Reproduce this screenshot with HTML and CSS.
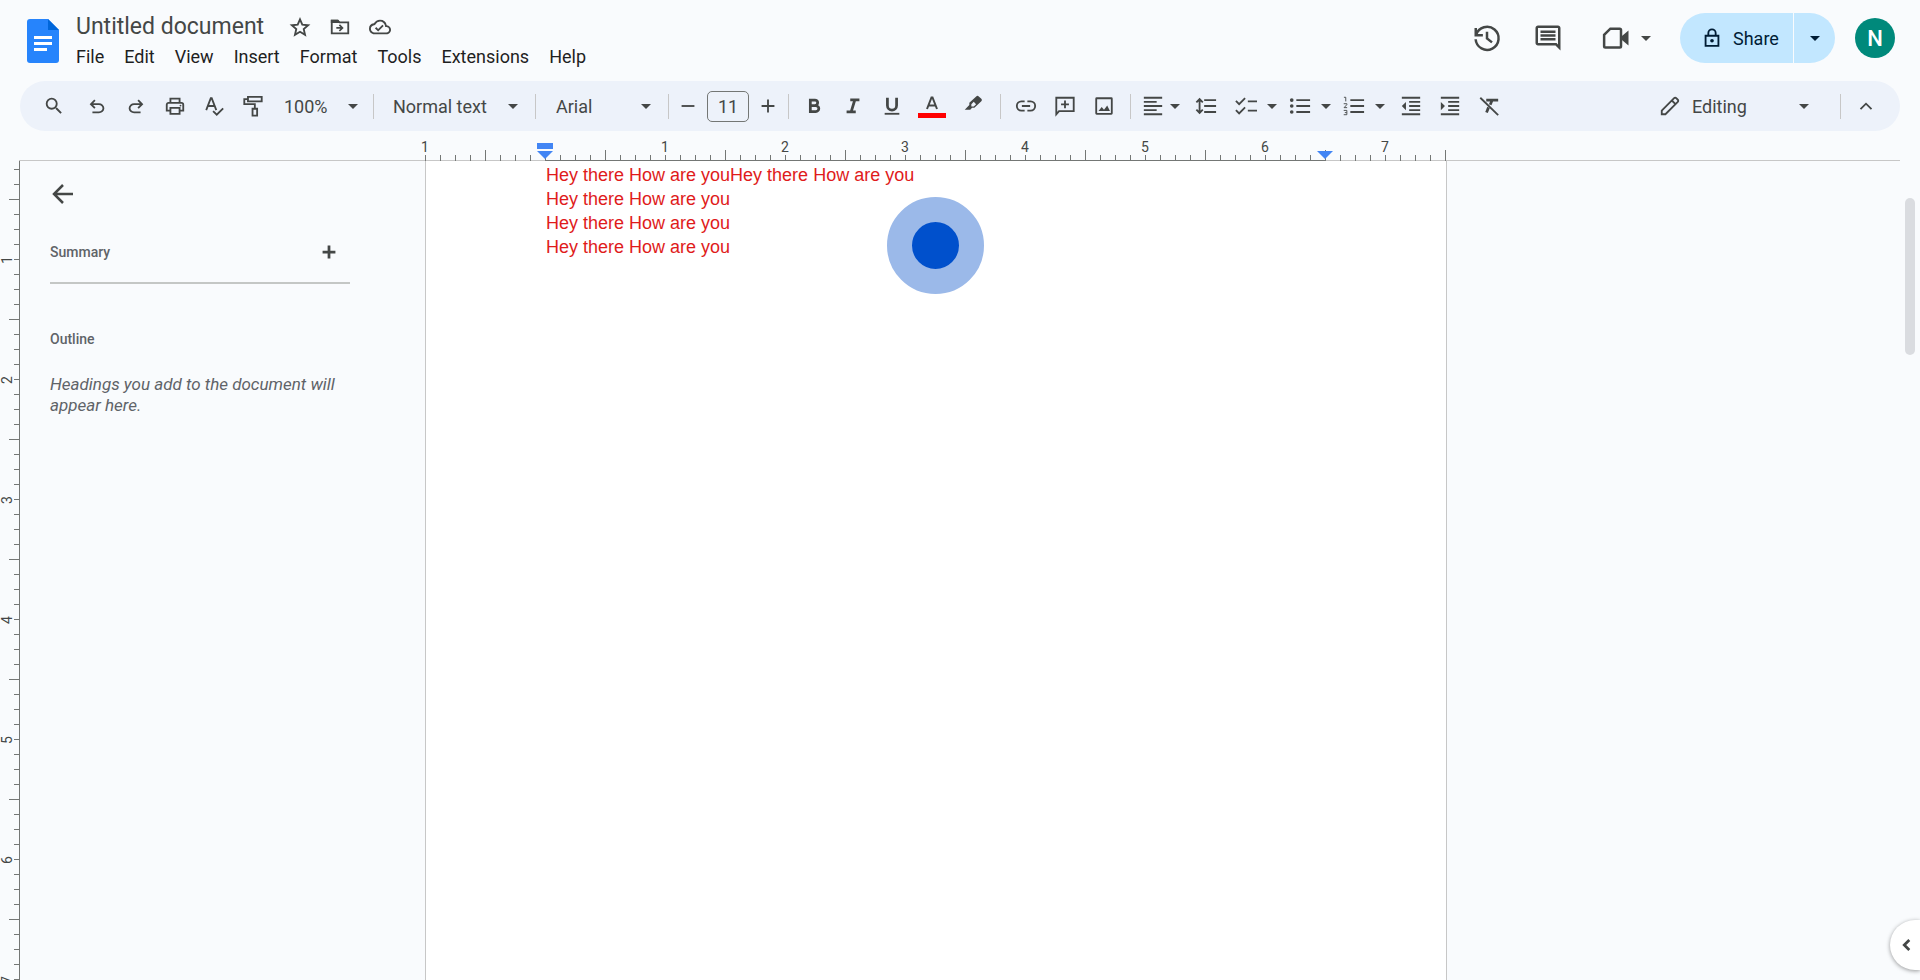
FILE: index.html
```html
<!DOCTYPE html>
<html lang="en">
<head>
  <meta charset="utf-8">
  <meta name="viewport" content="width=device-width, initial-scale=1">
  <title>Untitled document</title>
  <link rel="stylesheet" href="styles.css">
</head>
<body>
  <header class="header">
    <a href="#" class="logo" aria-label="Docs home">
      <svg width="32" height="44" viewBox="0 0 32 44">
        <path fill="#2684fc" d="M3 0h18l11 11v30a3 3 0 0 1-3 3H3a3 3 0 0 1-3-3V3a3 3 0 0 1 3-3z"/>
        <path fill="#0066da" d="M21 0l11 11H21z"/>
        <path fill="#fff" d="M7 17h18v3H7zM7 23h18v3H7zM7 29h13v3H7z"/>
      </svg>
    </a>
    <div class="heading">
      <div class="title-row">
        <h1 class="title">Untitled document</h1>
        <button class="title-btn" aria-label="Star"><svg class="icon" viewBox="0 0 24 24"><path d="M12 3.600l2.500 5.900 6.400.55-4.850 4.200 1.450 6.250L12 17.200 6.500 20.500l1.450-6.250L3.100 10.050l6.400-.55z" class="line"/></svg></button>
        <button class="title-btn" aria-label="Move"><svg class="icon" viewBox="0 0 24 24"><path d="M3 5h6.500l2 2H21v12H3z" class="line"/><path d="M2 4h8l2.500 3.500H2zM12 9l4 4-4 4-1.300-1.300 1.700-1.700H8v-2h4.400l-1.700-1.700z"/></svg></button>
        <button class="title-btn" aria-label="Saved to Drive"><svg class="icon" viewBox="0 0 24 24"><path d="M19.350 10.040A7.490 7.490 0 0 0 12 4C9.110 4 6.600 5.640 5.350 8.040A5.994 5.994 0 0 0 0 14c0 3.310 2.690 6 6 6h13c2.760 0 5-2.240 5-5 0-2.640-2.050-4.780-4.650-4.960zM19 18H6c-2.210 0-4-1.790-4-4 0-2.050 1.530-3.760 3.560-3.970l1.070-.11.5-.95A5.469 5.469 0 0 1 12 6c2.620 0 4.880 1.860 5.390 4.430l.3 1.500 1.530.11A2.980 2.980 0 0 1 22 15c0 1.650-1.350 3-3 3zm-9-3.820l-2.090-2.090L6.500 13.500 10 17l6.010-6.010-1.410-1.410z"/></svg></button>
      </div>
      <nav class="menu">
        <button>File</button>
        <button>Edit</button>
        <button>View</button>
        <button>Insert</button>
        <button>Format</button>
        <button>Tools</button>
        <button>Extensions</button>
        <button>Help</button>
      </nav>
    </div>
    <div class="actions">
      <button class="action" aria-label="Version history"><svg class="icon-lg" viewBox="0 0 24 24"><path d="M3.300 9.500A9.200 9.200 0 1 1 2.900 13M3 4v5.700h5.700M12 7v5.300l4 3.200" class="line"/></svg></button>
      <button class="action" aria-label="Comments"><svg class="icon-lg" viewBox="0 0 24 24"><path d="M21.990 4c0-1.100-.89-2-1.990-2H4c-1.100 0-2 .9-2 2v12c0 1.100.9 2 2 2h14l4 4-.01-18zM20 4v13.170L18.830 16H4V4h16zM6 12h12v2H6zm0-3h12v2H6zm0-3h12v2H6z"/></svg></button>
      <button class="meet" aria-label="Join a call"><svg class="icon-lg" viewBox="0 0 24 24"><path d="M7.500 4.500H15a1 1 0 0 1 1 1v13a1 1 0 0 1-1 1H3.500a1 1 0 0 1-1-1v-9z" class="line"/><path d="M16 11l6-5v12l-6-5z"/></svg><span class="caret"></span></button>
      <div class="share">
        <button class="share-main"><svg class="icon" viewBox="0 0 24 24"><path d="M5 9.500h14v11H5zM8 9V6.500a4 4 0 0 1 8 0V9" class="line"/><circle cx="12" cy="15" r="2"/></svg>Share</button>
        <button class="share-more" aria-label="Quick sharing actions"><span class="caret"></span></button>
      </div>
      <button class="avatar" aria-label="Account">N</button>
    </div>
  </header>

  <div class="toolbar" role="toolbar">
    <button class="tool search" aria-label="Search the menus"><svg class="icon" viewBox="0 0 24 24"><path d="M15.500 14h-.79l-.28-.27A6.470 6.470 0 0 0 16 9.500 6.500 6.500 0 1 0 9.500 16c1.610 0 3.090-.59 4.230-1.570l.27.28v.79l5 4.990L20.490 19l-4.990-5zm-6 0C7.010 14 5 11.990 5 9.500S7.010 5 9.500 5 14 7.010 14 9.500 11.990 14 9.500 14z"/></svg></button>
    <button class="tool" aria-label="Undo"><svg class="icon" viewBox="0 0 24 24"><path d="M7 20v-2h7.100q1.600 0 2.750-1T18 14.500t-1.150-2.500-2.750-1H7.800l2.600 2.600L9 15l-5-5 5-5 1.400 1.400L7.800 9h6.300q2.400 0 4.150 1.600T20 14.500t-1.750 3.900T14.100 20z"/></svg></button>
    <button class="tool" aria-label="Redo"><svg class="icon" viewBox="0 0 24 24"><path d="M17 20v-2H9.900q-1.600 0-2.750-1T6 14.500 7.150 12t2.750-1h6.300l-2.600 2.600L15 15l5-5-5-5-1.400 1.400L16.200 9H9.900q-2.400 0-4.150 1.600T4 14.500t1.750 3.900T9.900 20z"/></svg></button>
    <button class="tool" aria-label="Print"><svg class="icon" viewBox="0 0 24 24"><path d="M7 8V4h10v4M7 17H3v-6.500A2 2 0 0 1 5 8.500h14a2 2 0 0 1 2 2V17h-4M7 14h10v6.500H7z" class="line"/><circle cx="18" cy="11.500" r="1"/></svg></button>
    <button class="tool" aria-label="Spelling and grammar check"><svg class="icon" viewBox="0 0 24 24"><path d="M3.500 16.500L8.500 3.500h1l5 13M5.500 12h7M11 17.500l4 4 7-7" class="line"/></svg></button>
    <button class="tool" aria-label="Paint format"><svg class="icon" viewBox="0 0 24 24"><path d="M6.500 2h15v5h-15zM6.500 4.500H2.500v5.500H14v4.500M11.500 15h5v7.500h-5z" class="line"/></svg></button>
    <select class="drop zoom" aria-label="Zoom"><option>100%</option></select>
    <span class="sep"></span>
    <select class="drop paragraph" aria-label="Styles"><option>Normal text</option></select>
    <span class="sep"></span>
    <select class="drop font" aria-label="Font"><option>Arial</option></select>
    <span class="sep"></span>
    <div class="stepper">
      <button aria-label="Decrease font size"><svg class="icon" viewBox="0 0 24 24"><path d="M5 12h14" class="line"/></svg></button>
      <input type="text" value="11" aria-label="Font size">
      <button aria-label="Increase font size"><svg class="icon" viewBox="0 0 24 24"><path d="M5 12h14M12 5v14" class="line"/></svg></button>
    </div>
    <span class="sep"></span>
    <button class="tool" aria-label="Bold"><svg class="icon" viewBox="0 0 24 24"><path d="M8 5.500h5a3 3 0 0 1 0 6H8zM8 11.500h6a3.250 3.250 0 0 1 0 6.500H8z" class="line heavy"/></svg></button>
    <button class="tool" aria-label="Italic"><svg class="icon" viewBox="0 0 24 24"><path d="M9 5.200h10M5 18.500h10M14 5.200L10 18.500" class="line heavy"/></svg></button>
    <button class="tool" aria-label="Underline"><svg class="icon" viewBox="0 0 24 24"><path d="M7 3v8.500a5 5 0 0 0 10 0V3" class="line heavy"/><path d="M4 19.500h16v2H4z"/></svg></button>
    <button class="tool color" aria-label="Text color"><svg class="icon-md" viewBox="0 0 28 24"><path d="M9 15L13.500 3.500h1L19 15M10.500 11.500h7" class="line"/><path d="M0 19h28v5H0z" fill="#f00"/></svg></button>
    <button class="tool color" aria-label="Highlight color"><svg class="icon" viewBox="-2 2 24 24"><path d="M13.500 3.500a2 2 0 0 1 2.800 0l2.800 2.600a2 2 0 0 1 0 2.800L11.500 16H9l-2 2H1l5-5v-2.500zM8.200 12v2.500h2.600l2.600-2.500-2.600-2.600z" fill-rule="evenodd"/></svg></button>
    <span class="sep"></span>
    <button class="tool" aria-label="Insert link"><svg class="icon" viewBox="0 0 24 24"><path d="M10.500 7H7a5 5 0 0 0 0 10h3.500M13.500 7H17a5 5 0 0 1 0 10h-3.500M7.500 12h9" class="line"/></svg></button>
    <button class="tool" aria-label="Add comment"><svg class="icon" viewBox="0 0 24 24"><path d="M2.500 21V3h19v14.500H5.500zM12 6v8.500M7.700 10.200h8.600" class="line"/></svg></button>
    <button class="tool" aria-label="Insert image"><svg class="icon" viewBox="0 0 24 24"><path d="M4 3.500h16a.5.5 0 0 1 .5.5v16a.5.5 0 0 1-.5.500H4a.5.5 0 0 1-.5-.5V4a.5.5 0 0 1 .5-.5z" class="line"/><path d="M6 17.500l3.500-4.500 2.500 3 3.500-4.500 3 6z"/></svg></button>
    <span class="sep"></span>
    <button class="tool-drop narrow" aria-label="Align"><svg class="icon" viewBox="0 0 24 24"><path d="M2 2h20v2H2zm0 4.500h14v2H2zM2 11h20v2H2zm0 4.500h14v2H2zM2 20h20v2H2z"/></svg><span class="caret"></span></button>
    <button class="tool" aria-label="Line spacing"><svg class="icon" viewBox="0 0 24 24"><path d="M10 5.500h13M10 12h13M10 18.500h13M5 5v14M1.500 8L5 4.500 8.500 8M1.500 16L5 19.500 8.500 16" class="line"/></svg></button>
    <button class="tool-drop checklist" aria-label="Checklist"><svg class="icon" viewBox="0 0 24 24"><path d="M14 7h10M14 17h10M1 6.500L4.500 10 11 3.500M1 16.500L4.500 20l6.500-6.500" class="line"/></svg><span class="caret"></span></button>
    <button class="tool-drop" aria-label="Bulleted list"><svg class="icon" viewBox="0 0 24 24"><path d="M8 5.500h15M8 12h15M8 18.500h15" class="line"/><circle cx="3" cy="5.500" r="2"/><circle cx="3" cy="12" r="2"/><circle cx="3" cy="18.500" r="2"/></svg><span class="caret"></span></button>
    <button class="tool-drop" aria-label="Numbered list"><svg class="icon" viewBox="0 0 24 24"><path d="M8 5.500h15M8 12h15M8 18.500h15" class="line"/><path d="M1 2.500h2V7M.8 9.500h3.400v1L1.200 13.800h3.300M.8 16.800h3.400v4.700H.8M2 19.200h2" class="line thin"/></svg><span class="caret"></span></button>
    <button class="tool" aria-label="Decrease indent"><svg class="icon" viewBox="0 0 24 24"><path d="M2 2h20v2H2zM10 6.500h12v2H10zM10 11h12v2H10zm0 4.500h12v2H10zM2 20h20v2H2zM2 12l4.500-4.500v9z"/></svg></button>
    <button class="tool" aria-label="Increase indent"><svg class="icon" viewBox="0 0 24 24"><path d="M2 2h20v2H2zM10 6.500h12v2H10zM10 11h12v2H10zm0 4.500h12v2H10zM2 20h20v2H2zM2 7.500L6.500 12 2 16.500z"/></svg></button>
    <button class="tool" aria-label="Clear formatting"><svg class="icon" viewBox="0 0 24 24"><path d="M2.500 3L22 22" class="line"/><path d="M9 5.500h13M15.500 5.500l-2.200 5.200M11.500 13.500L9.300 19" class="line heavy"/></svg></button>
    <label class="mode"><svg class="icon" viewBox="0 0 24 24"><path d="M3 21v-4L16.500 3.500a1.600 1.600 0 0 1 2.300 0l1.700 1.700a1.600 1.600 0 0 1 0 2.300L7 21zM14 6l4 4" class="line"/></svg>
      <select class="drop editing" aria-label="Editing mode"><option>Editing</option></select>
    </label>
    <span class="sep"></span>
    <button class="tool" aria-label="Hide the menus"><svg class="icon" viewBox="0 0 24 24"><path d="M6 15.500l6-6 6 6" class="line"/></svg></button>
  </div>

  <div class="ruler">
    <div class="ruler-scale">
      <div class="ruler-labels"><span>1</span><span></span><span>1</span><span>2</span><span>3</span><span>4</span><span>5</span><span>6</span><span>7</span></div>
      <svg class="marker marker-left" width="16" height="17" viewBox="0 0 16 17"><path d="M0 0h16v6H0zM0 8h16l-8 8z"/></svg>
      <svg class="marker marker-right" width="16" height="17" viewBox="0 0 16 17"><path d="M0 8h16l-8 8z"/></svg>
    </div>
  </div>

  <main class="workspace">
    <div class="left">
      <div class="side-ruler"><span>1</span><span>2</span><span>3</span><span>4</span><span>5</span><span>6</span><span>7</span></div>
      <aside class="outline">
        <button class="back" aria-label="Close outline"><svg class="icon-lg" viewBox="0 0 24 24"><path d="M20 12H5.500M12 4.800L4.800 12l7.200 7.200" class="line"/></svg></button>
        <div class="summary">
          <h2>Summary</h2>
          <button aria-label="Add summary"><svg class="icon" viewBox="0 0 24 24"><path d="M5 12h14M12 5v14" class="line heavy"/></svg></button>
        </div>
        <h2>Outline</h2>
        <p>Headings you add to the document will appear here.</p>
      </aside>
    </div>
    <article class="page">
      <p>Hey there How are youHey there How are you</p>
      <p>Hey there How are you</p>
      <p>Hey there How are you</p>
      <p>Hey there How are you</p>
      <span class="pointer"></span>
    </article>
    <span class="scroll-thumb"></span>
  </main>
  <button class="side-toggle" aria-label="Show side panel"><svg class="icon" viewBox="0 0 24 24"><path d="M14.500 6.500L9 12l5.500 5.500" class="line heavy"/></svg></button>
</body>
</html>
```
FILE: styles.css
```css
* { box-sizing: border-box; }

body {
  margin: 0;
  height: 100vh;
  display: flex;
  flex-direction: column;
  overflow: hidden;
  background: #f9fbfd;
  color: #444746;
  font-family: Roboto, Arial, sans-serif;
  font-size: 18px;
}

button, select, input {
  margin: 0;
  padding: 0;
  border: 0;
  background: none;
  color: inherit;
  font: inherit;
}
button { cursor: pointer; }
h1, h2, p { margin: 0; }

svg      { display: block; flex: none; fill: currentColor; }
.icon    { width: 22px; height: 22px; }
.icon-md { width: 28px; height: 24px; }
.icon-lg { width: 30px; height: 30px; }
.line    { fill: none; stroke: currentColor; stroke-width: 2; }
.heavy   { stroke-width: 3; }
.thin    { stroke-width: 1; }

.caret {
  border: 5px solid transparent;
  border-top-color: currentColor;
  border-bottom: 0;
}

/* header */
.header {
  display: flex;
  flex: none;
  height: 81px;
  padding: 0 25px 0 27px;
}
.logo { padding-top: 19px; }
.heading { padding: 10px 0 0 17px; }
.title-row { display: flex; align-items: center; height: 34px; }
.title { margin-right: 16px; font-size: 23px; font-weight: 400; line-height: 34px; }
.title-btn { display: flex; justify-content: center; width: 40px; }
.menu { display: flex; gap: 20px; color: #1f1f1f; }
.menu button { line-height: 26px; }

.actions { display: flex; align-items: center; height: 76px; margin-left: auto; }
.action { display: flex; justify-content: center; width: 61px; }
.meet { display: flex; align-items: center; gap: 10px; margin: 0 29px 0 23px; }
.share { display: flex; height: 50px; margin-right: 20px; color: #001d35; }
.share button { background: #c2e7ff; }
.share .share-main {
  display: flex;
  align-items: center;
  gap: 10px;
  width: 113px;
  padding-left: 21px;
  border-radius: 25px 0 0 25px;
}
.share-more {
  display: flex;
  align-items: center;
  justify-content: center;
  width: 41px;
  margin-left: 1px;
  border-radius: 0 25px 25px 0;
}
.avatar {
  width: 40px;
  height: 40px;
  border-radius: 50%;
  background: #00897b;
  color: #fff;
  font-size: 22px;
  font-weight: 500;
}

/* toolbar */
.toolbar {
  display: flex;
  flex: none;
  align-items: center;
  height: 50px;
  margin: 0 20px;
  padding: 0 15px 0 14px;
  border-radius: 25px;
  background: #edf2fa;
}
.tool { display: flex; justify-content: center; width: 39px; }
.color { width: 41px; }
.search { margin-right: 4px; }
.sep { width: 1px; height: 25px; margin: 0 5px 0 7px; background: #c7c7c7; }
.drop {
  height: 34px;
  margin: 0 4px;
  appearance: none;
  background: url("data:image/svg+xml,%3Csvg xmlns='http://www.w3.org/2000/svg' width='10' height='5'%3E%3Cpath d='M0 0h10L5 5z' fill='%23444746'/%3E%3C/svg%3E") no-repeat right 6px center;
}
.zoom      { width: 88px; margin-right: 2px; padding-left: 8px; }
.paragraph { width: 141px; padding-left: 10px; }
.font      { width: 112px; padding-left: 11px; }
.stepper { display: flex; align-items: center; gap: 8px; margin: 0 2px 0 3px; }
.stepper input {
  width: 42px;
  height: 31px;
  border: 1px solid #747775;
  border-radius: 5px;
  text-align: center;
}
.tool-drop {
  display: flex;
  align-items: center;
  justify-content: center;
  gap: 10px;
  width: 54px;
}
.narrow { gap: 6px; width: 50px; }
.checklist { margin-left: 4px; }
.mode { display: flex; align-items: center; margin-left: auto; }
.editing { width: 123px; margin: 0 18px 0 11px; }

/* rulers, 120px to the inch */
.ruler {
  display: grid;
  flex: none;
  grid-template-columns: 1fr 1022px 1fr;
  height: 30px;
  margin: 0 20px 0 19px;
  padding-right: 47px;
  background: linear-gradient(#c7c7c7, #c7c7c7) no-repeat bottom / 100% 1px;
}
.ruler-scale {
  position: relative;
  grid-column: 2;
  background:
    linear-gradient(#747775, #747775) no-repeat 120px 100% / 780px 1px,
    linear-gradient(90deg, #747775 1px, transparent 1px) 60px 100% / 120px 11px repeat-x,
    linear-gradient(90deg, #747775 1px, transparent 1px) 0 100% / 15px 6px repeat-x;
}
.ruler-labels {
  display: flex;
  margin-left: -60px;
  padding-top: 8px;
  font-size: 14px;
  line-height: 16px;
}
.ruler-labels span { flex: none; width: 120px; text-align: center; }
.marker { position: absolute; top: 12px; fill: #4285f4; }
.marker-left { left: 112px; }
.marker-right { left: 892px; }

.side-ruler {
  flex: none;
  width: 20px;
  padding-top: 39px;
  overflow: hidden;
  border-right: 1px solid #747775;
  background:
    linear-gradient(#747775 1px, transparent 1px) 100% 38px / 10px 120px repeat-y,
    linear-gradient(#747775 1px, transparent 1px) 100% 8px / 5px 15px repeat-y;
  font-size: 14px;
}
.side-ruler span {
  display: block;
  width: 14px;
  height: 120px;
  line-height: 14px;
  text-align: center;
  writing-mode: vertical-rl;
  transform: rotate(180deg);
}

/* document area */
.workspace {
  position: relative;
  display: grid;
  flex: 1;
  grid-template-columns: 1fr 1022px 1fr;
  min-height: 0;
  padding-right: 48px;
}
.left { display: flex; min-height: 0; }
.outline { width: 330px; padding: 18px 0 0 30px; color: #5f6368; }
.outline h2 { font-size: 14px; font-weight: 500; line-height: 20px; }
.outline p { margin-top: 25px; font-size: 17px; font-style: italic; line-height: 21px; }
.back { display: block; margin-left: -2px; color: #444746; }
.summary {
  display: flex;
  align-items: center;
  justify-content: space-between;
  height: 75px;
  margin-bottom: 45px;
  padding: 12px 10px 0 0;
  border-bottom: 2px solid #c4c7c5;
}
.summary button { color: #444746; }

.page {
  position: relative;
  padding: 2px 120px;
  border: solid #c7c7c7;
  border-width: 0 1px;
  background: #fff;
  color: #e01b1b;
  font-family: "Liberation Sans", Arial, sans-serif;
  line-height: 24px;
}
.pointer {
  position: absolute;
  top: 36px;
  left: 461px;
  width: 97px;
  height: 97px;
  border: 25px solid #9bb9e9;
  border-radius: 50%;
  background: #0050cc;
}
.scroll-thumb {
  position: absolute;
  top: 37px;
  right: 5px;
  width: 10px;
  height: 157px;
  border-radius: 5px;
  background: #dadce0;
}
.side-toggle {
  position: absolute;
  right: 0;
  bottom: 10px;
  width: 30px;
  height: 50px;
  padding-left: 6px;
  border-radius: 25px 0 0 25px;
  background: #fff;
  box-shadow: 0 1px 4px rgba(0, 0, 0, 0.4);
}
```
